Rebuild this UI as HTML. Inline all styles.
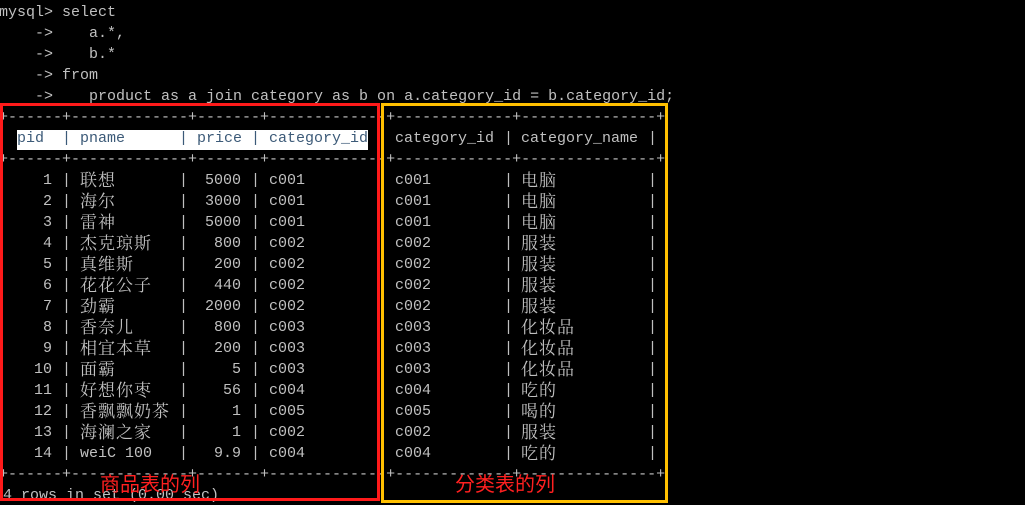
<!DOCTYPE html>
<html><head><meta charset="utf-8"><style>
body{margin:0;width:1025px;height:503px;background:#000;overflow:hidden;position:relative;font-family:"Liberation Mono","Noto Sans CJK SC",monospace;font-size:15px;color:#c0c0c0}
.l,.r{position:absolute;left:0;height:18px;line-height:18px;white-space:pre;width:1025px}
.r span{position:absolute;top:0}
.r span.z{top:-2px}
.z{font-family:"Noto Serif CJK SC","Noto Sans CJK SC",serif;font-size:17px;letter-spacing:1px}
.a{left:0;width:52px;text-align:right}
.p1{left:62px}.p2{left:179px}.p3{left:251px}.p5{left:504px}.p6{left:648px}
.b{left:80px}.c{left:180px;width:61px;text-align:right}.d{left:269px}.e{left:395px}.f{left:521px}
.box{position:absolute;box-sizing:border-box;border:3px solid}
.lab{position:absolute;font-family:"Noto Sans CJK SC",sans-serif;font-size:20px;line-height:22px}
</style></head><body>
<div class="l" style="top:4px;left:-1px">mysql&gt; select</div>
<div class="l" style="top:25px;left:-1px">    -&gt;    a.*,</div>
<div class="l" style="top:46px;left:-1px">    -&gt;    b.*</div>
<div class="l" style="top:67px;left:-1px">    -&gt; from</div>
<div class="l" style="top:88px;left:-1px">    -&gt;    product as a join category as b on a.category_id = b.category_id;</div>
<div class="l" style="top:109px;left:-1px">+------+-------------+-------+-------------+-------------+---------------+</div>
<div style="position:absolute;left:17px;top:130px;width:351px;height:20px;background:#fff"></div>
<div class="r" style="top:130px;color:#3c5a78"><span style="left:17px">pid</span><span class="p1">|</span><span class="b">pname</span><span class="p2">|</span><span style="left:197px">price</span><span class="p3">|</span><span class="d">category_id</span></div>
<div class="r" style="top:130px"><span class="e">category_id</span><span class="p5">|</span><span class="f">category_name</span><span class="p6">|</span></div>
<div class="l" style="top:151px;left:-1px">+------+-------------+-------+-------------+-------------+---------------+</div>

<div class="r" style="top:172px"><span class="a">1</span><span class="p1">|</span><span class="b z">联想</span><span class="p2">|</span><span class="c">5000</span><span class="p3">|</span><span class="d">c001</span><span class="e">c001</span><span class="p5">|</span><span class="f z">电脑</span><span class="p6">|</span></div>
<div class="r" style="top:193px"><span class="a">2</span><span class="p1">|</span><span class="b z">海尔</span><span class="p2">|</span><span class="c">3000</span><span class="p3">|</span><span class="d">c001</span><span class="e">c001</span><span class="p5">|</span><span class="f z">电脑</span><span class="p6">|</span></div>
<div class="r" style="top:214px"><span class="a">3</span><span class="p1">|</span><span class="b z">雷神</span><span class="p2">|</span><span class="c">5000</span><span class="p3">|</span><span class="d">c001</span><span class="e">c001</span><span class="p5">|</span><span class="f z">电脑</span><span class="p6">|</span></div>
<div class="r" style="top:235px"><span class="a">4</span><span class="p1">|</span><span class="b z">杰克琼斯</span><span class="p2">|</span><span class="c">800</span><span class="p3">|</span><span class="d">c002</span><span class="e">c002</span><span class="p5">|</span><span class="f z">服装</span><span class="p6">|</span></div>
<div class="r" style="top:256px"><span class="a">5</span><span class="p1">|</span><span class="b z">真维斯</span><span class="p2">|</span><span class="c">200</span><span class="p3">|</span><span class="d">c002</span><span class="e">c002</span><span class="p5">|</span><span class="f z">服装</span><span class="p6">|</span></div>
<div class="r" style="top:277px"><span class="a">6</span><span class="p1">|</span><span class="b z">花花公子</span><span class="p2">|</span><span class="c">440</span><span class="p3">|</span><span class="d">c002</span><span class="e">c002</span><span class="p5">|</span><span class="f z">服装</span><span class="p6">|</span></div>
<div class="r" style="top:298px"><span class="a">7</span><span class="p1">|</span><span class="b z">劲霸</span><span class="p2">|</span><span class="c">2000</span><span class="p3">|</span><span class="d">c002</span><span class="e">c002</span><span class="p5">|</span><span class="f z">服装</span><span class="p6">|</span></div>
<div class="r" style="top:319px"><span class="a">8</span><span class="p1">|</span><span class="b z">香奈儿</span><span class="p2">|</span><span class="c">800</span><span class="p3">|</span><span class="d">c003</span><span class="e">c003</span><span class="p5">|</span><span class="f z">化妆品</span><span class="p6">|</span></div>
<div class="r" style="top:340px"><span class="a">9</span><span class="p1">|</span><span class="b z">相宜本草</span><span class="p2">|</span><span class="c">200</span><span class="p3">|</span><span class="d">c003</span><span class="e">c003</span><span class="p5">|</span><span class="f z">化妆品</span><span class="p6">|</span></div>
<div class="r" style="top:361px"><span class="a">10</span><span class="p1">|</span><span class="b z">面霸</span><span class="p2">|</span><span class="c">5</span><span class="p3">|</span><span class="d">c003</span><span class="e">c003</span><span class="p5">|</span><span class="f z">化妆品</span><span class="p6">|</span></div>
<div class="r" style="top:382px"><span class="a">11</span><span class="p1">|</span><span class="b z">好想你枣</span><span class="p2">|</span><span class="c">56</span><span class="p3">|</span><span class="d">c004</span><span class="e">c004</span><span class="p5">|</span><span class="f z">吃的</span><span class="p6">|</span></div>
<div class="r" style="top:403px"><span class="a">12</span><span class="p1">|</span><span class="b z">香飘飘奶茶</span><span class="p2">|</span><span class="c">1</span><span class="p3">|</span><span class="d">c005</span><span class="e">c005</span><span class="p5">|</span><span class="f z">喝的</span><span class="p6">|</span></div>
<div class="r" style="top:424px"><span class="a">13</span><span class="p1">|</span><span class="b z">海澜之家</span><span class="p2">|</span><span class="c">1</span><span class="p3">|</span><span class="d">c002</span><span class="e">c002</span><span class="p5">|</span><span class="f z">服装</span><span class="p6">|</span></div>
<div class="r" style="top:445px"><span class="a">14</span><span class="p1">|</span><span class="b">weiC 100</span><span class="p2">|</span><span class="c">9.9</span><span class="p3">|</span><span class="d">c004</span><span class="e">c004</span><span class="p5">|</span><span class="f z">吃的</span><span class="p6">|</span></div>
<div class="l" style="top:466px;left:-1px">+------+-------------+-------+-------------+-------------+---------------+</div>
<div class="l" style="top:487px;left:-6px">14 rows in set (0.00 sec)</div>

<div class="box" style="left:0;top:103px;width:380px;height:398px;border-color:#ff1a1a"></div>
<div class="box" style="left:381px;top:103px;width:287px;height:400px;border-color:#ffc000"></div>
<div class="lab" style="left:100px;top:472px;color:#ff2020">商品表的列</div>
<div class="lab" style="left:455px;top:472px;color:#ff2020">分类表的列</div>
</body></html>
